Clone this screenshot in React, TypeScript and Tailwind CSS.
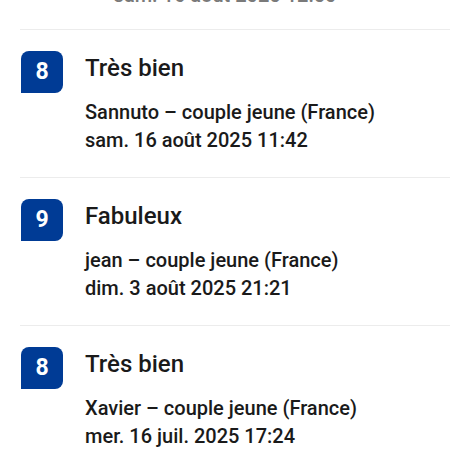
const reviews = [
  { score: 8, label: 'Très bien', author: 'Sannuto – couple jeune (France)', date: 'sam. 16 août 2025 11:42' },
  { score: 9, label: 'Fabuleux', author: 'jean – couple jeune (France)', date: 'dim. 3 août 2025 21:21' },
  { score: 8, label: 'Très bien', author: 'Xavier – couple jeune (France)', date: 'mer. 16 juil. 2025 17:24' },
];

export default function App() {
  return (
    <div className="w-[450px] h-[450px] overflow-hidden bg-white text-[#1a1a1a]" style={{ fontFamily: 'Roboto, "Noto Sans", sans-serif' }}>
      {/* previous entry, mostly scrolled away */}
      <div className="h-[29px] overflow-hidden">
        <p className="-mt-[19px] text-center text-[20px] leading-[28px] font-medium text-[#7a7a7a]">sam. 16 août 2025 12:50</p>
      </div>

      {reviews.map((r, i) => (
        <div key={i} className="ml-5 border-t border-[#ececec] pt-[21px] pb-[23px] flex">
          <div className="ml-px w-[42px] h-[42px] shrink-0 rounded-[8px] rounded-bl-none bg-[#003b95] text-white flex items-center justify-center text-[23px] font-bold">
            {r.score}
          </div>
          <div className="ml-[22px]">
            <h3 className="text-[24px] leading-[34px] font-medium">{r.label}</h3>
            <div className="mt-[13px] text-[20px] leading-[28px] font-medium">
              <p>{r.author}</p>
              <p>{r.date}</p>
            </div>
          </div>
        </div>
      ))}
    </div>
  );
}
